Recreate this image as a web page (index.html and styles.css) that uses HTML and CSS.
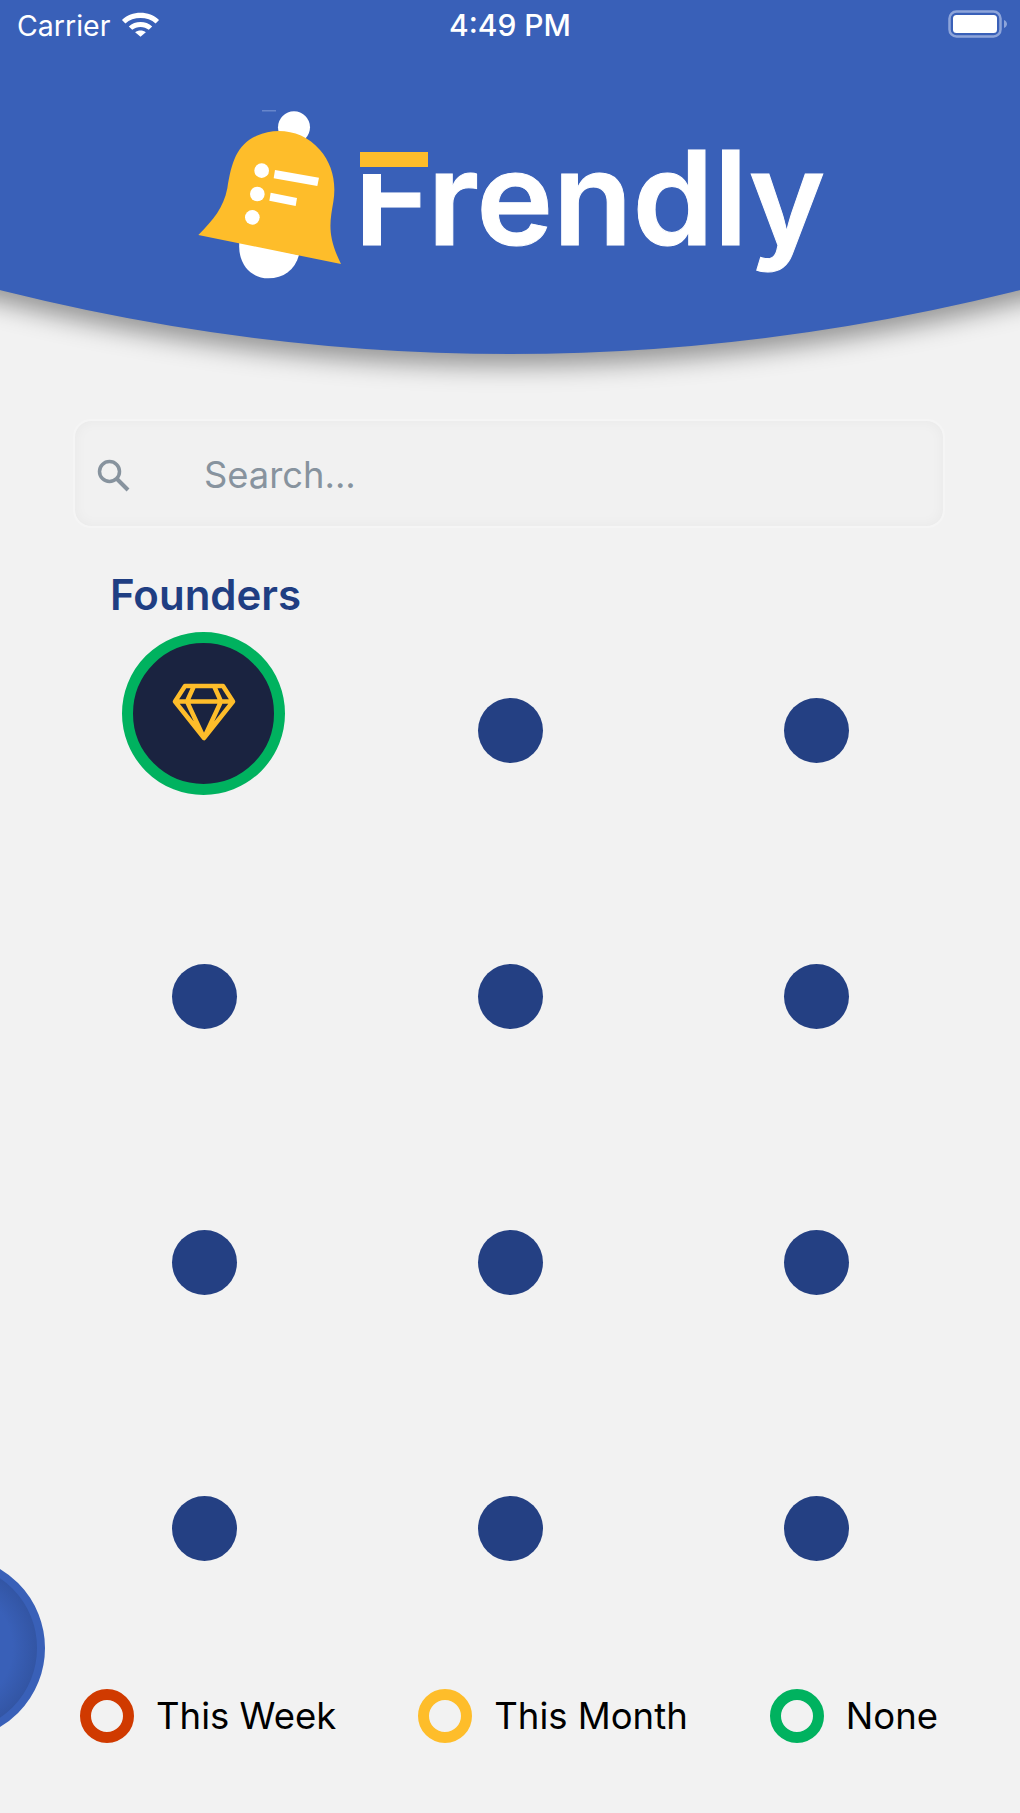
FILE: index.html
```html
<!DOCTYPE html>
<html lang="en">
<head>
    <meta charset="UTF-8">
    <meta name="viewport" content="width=device-width, initial-scale=1.0">
    <title>Frendly</title>
    <link rel="stylesheet" href="styles.css">
</head>
<body>
    <div class="screen">
        <header class="header">
            <svg class="header-bg" viewBox="0 0 1020 354" preserveAspectRatio="none">
                <path d="M-40 0H1060V279.600Q510 428.400 -40 279.600Z" fill="#3960b8"/>
            </svg>
            <div class="status-bar">
                <div class="status-left">
                    <span>Carrier</span>
                    <svg class="wifi" viewBox="0 0 40 26">
                        <path d="M1 9.500C11 -0.500 29 -0.500 39 9.500L35.500 13C27.500 5.500 12.500 5.500 4.500 13Z" fill="#fff"/>
                        <path d="M8 16C14.500 10 25.500 10 32 16L28.500 19.500C24 15.500 16 15.500 11.500 19.500Z" fill="#fff"/>
                        <path d="M14.500 22C17.500 19.500 22.500 19.500 25.500 22L20 26.500Z" fill="#fff"/>
                    </svg>
                </div>
                <span class="status-time">4:49 PM</span>
                <svg class="battery" viewBox="0 0 60 30">
                    <rect x="1.500" y="2.500" width="51" height="25" rx="7" fill="none" stroke="#8ea5da" stroke-width="2.500"/>
                    <rect x="5" y="6" width="44" height="18" rx="3.500" fill="#fff"/>
                    <path d="M56 11C58 12 59 13.500 59 15C59 16.500 58 18 56 19Z" fill="#8ea5da"/>
                </svg>
            </div>
            <div class="logo">
                <svg class="bell" viewBox="0 0 510 600">
                    <rect x="246" y="46" width="42" height="3" fill="#7f9ad6"/>
                    <circle cx="342" cy="97" r="48" fill="#fff"/>
                    <path d="M178 440C172 510 215 550 265 550C310 550 345 525 357 480Z" fill="#fff"/>
                    <path d="M55 420C100 375 130 340 142 280C155 200 170 150 230 122C290 95 370 105 420 165C455 205 470 260 460 320C450 380 440 420 483 507Z" fill="#febd2a"/>
                    <circle cx="245" cy="227" r="22" fill="#fff"/>
                    <circle cx="232" cy="297" r="22" fill="#fff"/>
                    <circle cx="217" cy="367" r="22" fill="#fff"/>
                    <path d="M285 225L417 248L412 273L281 250Z" fill="#fff"/>
                    <path d="M272 293L351 309L347 333L268 317Z" fill="#fff"/>
                </svg>
                <div class="wordmark">
                    Frendly
                    <span class="wordmark-bar"></span>
                </div>
            </div>
        </header>

        <div class="search">
            <svg class="search-icon" viewBox="0 0 34 34">
                <circle cx="13.500" cy="13.500" r="10" fill="none" stroke="#87939e" stroke-width="3.500"/>
                <path d="M21 21L32 32" stroke="#87939e" stroke-width="4" fill="none"/>
            </svg>
            <span class="search-text">Search...</span>
        </div>

        <h2 class="section-title">Founders</h2>

        <div class="grid">
            <div class="cell">
                <div class="avatar">
                    <svg class="gem" viewBox="0 0 64 58">
                        <path d="M13 3H51L61 18.500L32 55L3 18.500Z M3 18.500H61 M22 3L15 18.500L32 55L49 18.500L42 3" fill="none" stroke="#febd2a" stroke-width="4.500" stroke-linejoin="round"/>
                    </svg>
                </div>
            </div>
            <div class="cell"><div class="dot"></div></div>
            <div class="cell"><div class="dot"></div></div>
            <div class="cell"><div class="dot"></div></div>
            <div class="cell"><div class="dot"></div></div>
            <div class="cell"><div class="dot"></div></div>
            <div class="cell"><div class="dot"></div></div>
            <div class="cell"><div class="dot"></div></div>
            <div class="cell"><div class="dot"></div></div>
            <div class="cell"><div class="dot"></div></div>
            <div class="cell"><div class="dot"></div></div>
            <div class="cell"><div class="dot"></div></div>
        </div>

        <div class="fab"></div>

        <div class="legend">
            <div class="legend-item"><span class="ring ring-week"></span>This Week</div>
            <div class="legend-item"><span class="ring ring-month"></span>This Month</div>
            <div class="legend-item"><span class="ring ring-none"></span>None</div>
        </div>
    </div>
</body>
</html>
```

FILE: styles.css
```css
* {
    box-sizing: border-box;
}
body {
    margin: 0;
    font-family: Inter, "Noto Sans", sans-serif;
    background-color: #f2f2f2;
    color: #000;
}
.screen {
    position: relative;
    width: 1020px;
    height: 1813px;
    overflow: hidden;
}
.header {
    position: relative;
    height: 354px;
}
.header-bg {
    position: absolute;
    top: 0;
    left: 0;
    width: 1020px;
    height: 354px;
    overflow: visible;
    filter: drop-shadow(0 12px 12px rgba(0, 0, 0, 0.38));
}
.status-bar {
    position: relative;
    display: grid;
    grid-template-columns: 1fr auto 1fr;
    align-items: center;
    height: 50px;
    padding: 0 12px 0 17px;
    color: #fff;
    font-size: 28.500px;
}
.status-left {
    display: flex;
    align-items: center;
    gap: 11px;
}
.wifi {
    width: 39px;
    height: 27px;
    margin-bottom: 4px;
}
.status-time {
    margin-left: -5px;
    font-weight: 500;
    font-size: 30px;
}
.battery {
    justify-self: end;
    width: 60px;
    height: 30px;
    margin-bottom: 2px;
}
.logo {
    position: relative;
    display: flex;
    padding: 45px 0 0 180px;
}
.bell {
    width: 170px;
    height: 200px;
    flex: none;
}
.wordmark {
    position: relative;
    height: 130px;
    margin: 38px 0 0 4px;
    font-size: 130px;
    font-weight: 600;
    line-height: 130px;
    color: #fff;
    -webkit-text-stroke: 1px #fff;
    white-space: nowrap;
}
.wordmark-bar {
    position: absolute;
    left: 6px;
    top: 19px;
    width: 68px;
    height: 15px;
    background-color: #febd2a;
    box-shadow: 0 7px 0 #3960b8, 0 -6px 0 #3960b8;
}
.search {
    display: flex;
    align-items: center;
    width: 872px;
    height: 109px;
    margin: 65px 0 0 73px;
    padding: 2px 0 0 21px;
    border-radius: 18px;
    background-color: #f1f1f1;
    border: 2px solid #f5f5f5;
    box-shadow: inset 0 0 14px rgba(0, 0, 0, 0.04);
}
.search-icon {
    width: 34px;
    height: 34px;
}
.search-text {
    margin-left: 74px;
    font-size: 36.300px;
    color: #87939e;
}
.section-title {
    margin: 42px 0 0 110px;
    font-size: 42px;
    line-height: 50px;
    font-weight: 600;
    color: #1f3e82;
}
.grid {
    display: grid;
    grid-template-columns: repeat(3, 306px);
    grid-auto-rows: 266px;
    margin: 12px 0 0 51px;
}
.cell {
    display: flex;
    justify-content: center;
}
.dot {
    width: 65px;
    height: 65px;
    margin-top: 66px;
    border-radius: 50%;
    background-color: #244083;
}
.avatar {
    display: flex;
    align-items: center;
    justify-content: center;
    width: 163px;
    height: 163px;
    margin-left: -1px;
    border: 11px solid #00b25f;
    border-radius: 50%;
    background-color: #1a2340;
}
.gem {
    width: 64px;
    height: 58px;
    margin-top: -4px;
}
.fab {
    position: absolute;
    left: -139px;
    top: 1556px;
    width: 184px;
    height: 184px;
    border: 8px solid #3960b8;
    border-radius: 50%;
    background: radial-gradient(circle, #3960b8 50%, #2a4688 100%);
}
.legend {
    position: absolute;
    left: 80px;
    right: 82px;
    top: 1689px;
    display: flex;
    justify-content: space-between;
}
.legend-item {
    display: flex;
    align-items: center;
    gap: 22px;
    font-size: 36.500px;
}
.ring {
    width: 54px;
    height: 54px;
    border: 11px solid;
    border-radius: 50%;
}
.ring-week {
    border-color: #d03a00;
}
.ring-month {
    border-color: #febd2a;
}
.ring-none {
    border-color: #00b25f;
}
```
